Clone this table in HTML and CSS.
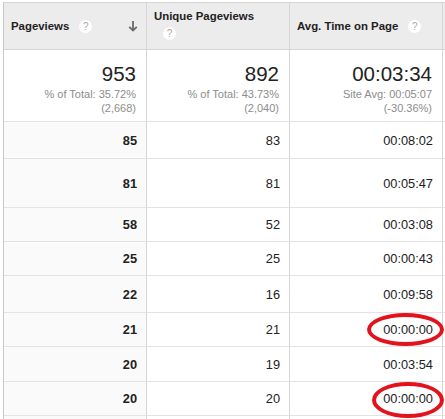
FILE: index.html
```html
<!DOCTYPE html>
<html>
<head>
<meta charset="utf-8">
<link rel="stylesheet" href="styles.css">
</head>
<body>
<div class="page">
  <div class="table">
    <div class="cell head"><span class="htext">Pageviews</span><span class="help">?</span><svg class="sort" width="10" height="12" viewBox="0 0 10 12"><path d="M5 1 V10.5 M1.2 6.8 L5 10.5 L8.8 6.8" fill="none" stroke="#6b6b6b" stroke-width="1.8"/></svg></div>
    <div class="cell head stack"><span class="htext">Unique Pageviews</span><span class="help">?</span></div>
    <div class="cell head"><span class="htext">Avg. Time on Page</span><span class="help">?</span></div>
    <div class="cell head"></div>

    <div class="cell sum"><div class="big">953</div><div class="sub">% of Total: 35.72%</div><div class="sub">(2,668)</div></div>
    <div class="cell sum"><div class="big">892</div><div class="sub">% of Total: 43.73%</div><div class="sub">(2,040)</div></div>
    <div class="cell sum"><div class="big">00:03:34</div><div class="sub">Site Avg: 00:05:07</div><div class="sub">(-30.36%)</div></div>
    <div class="cell sum"></div>

    <div class="cell num sorted">85</div><div class="cell num">83</div><div class="cell num">00:08:02</div><div class="cell"></div>
    <div class="cell num sorted">81</div><div class="cell num">81</div><div class="cell num">00:05:47</div><div class="cell"></div>
    <div class="cell num sorted">58</div><div class="cell num">52</div><div class="cell num">00:03:08</div><div class="cell"></div>
    <div class="cell num sorted">25</div><div class="cell num">25</div><div class="cell num">00:00:43</div><div class="cell"></div>
    <div class="cell num sorted">22</div><div class="cell num">16</div><div class="cell num">00:09:58</div><div class="cell"></div>
    <div class="cell num sorted">21</div><div class="cell num">21</div><div class="cell num">00:00:00</div><div class="cell"></div>
    <div class="cell num sorted">20</div><div class="cell num">19</div><div class="cell num">00:03:54</div><div class="cell"></div>
    <div class="cell num sorted">20</div><div class="cell num">20</div><div class="cell num">00:00:00</div><div class="cell"></div>
    <div class="cell num sorted"></div><div class="cell num"></div><div class="cell num"></div><div class="cell"></div>
  </div>
  <div class="ring ring1"></div>
  <div class="ring ring2"></div>
</div>
</body>
</html>
```
FILE: styles.css
```css
html, body {
  margin: 0;
  padding: 0;
  background: #fff;
  overflow: hidden;
}
.page {
  position: relative;
  width: 445px;
  height: 419px;
  overflow: hidden;
  font-family: "Liberation Sans", Arial, sans-serif;
  color: #222;
}
.table {
  margin: 2px 0 0 3px;
  display: grid;
  grid-template-columns: 143px 143px 153px 60px;
  grid-template-rows: 47px 72px 37px 49px 34px 34px 37px 34px 35px 34px 40px;
  border-top: 1px solid #d4d4d4;
  border-left: 1px solid #c8c8c8;
}
.cell {
  box-sizing: border-box;
  border-right: 1px solid #d6d6d6;
  border-bottom: 1px solid #e3e3e3;
  padding: 0 9px 0 7px;
}
.head {
  background: #ececec;
  border-bottom-color: #d4d4d4;
  display: flex;
  align-items: center;
  font-size: 11.4px;
  font-weight: bold;
  color: #222;
}
.head.stack {
  flex-direction: column;
  align-items: flex-start;
  justify-content: flex-start;
  padding-top: 7px;
}
.help {
  display: inline-flex;
  align-items: center;
  justify-content: center;
  width: 13px;
  height: 13px;
  border-radius: 50%;
  background: #fff;
  color: #a8a8a8;
  font-size: 10px;
  font-weight: normal;
  margin-left: 10px;
}
.stack .help {
  margin: 5px 0 0 9px;
}
.sort {
  margin-left: auto;
  margin-right: -1px;
}
.sum {
  text-align: right;
  padding-top: 12px;
  padding-right: 10px;
}
.big {
  font-size: 20.5px;
  line-height: 24px;
  color: #222;
  margin-bottom: 1px;
}
.sub {
  font-size: 11px;
  line-height: 14px;
  color: #8c8c8c;
}
.num {
  display: flex;
  align-items: center;
  justify-content: flex-end;
  font-size: 12.8px;
  color: #222;
}
.sorted {
  background: #fafafa;
  font-weight: bold;
}
.ring {
  position: absolute;
  box-sizing: border-box;
  border: 4px solid #e2131c;
  border-radius: 50%;
}
.ring1 {
  left: 367px;
  top: 313px;
  width: 77px;
  height: 33px;
}
.ring2 {
  left: 372px;
  top: 382px;
  width: 72px;
  height: 36px;
}
```
